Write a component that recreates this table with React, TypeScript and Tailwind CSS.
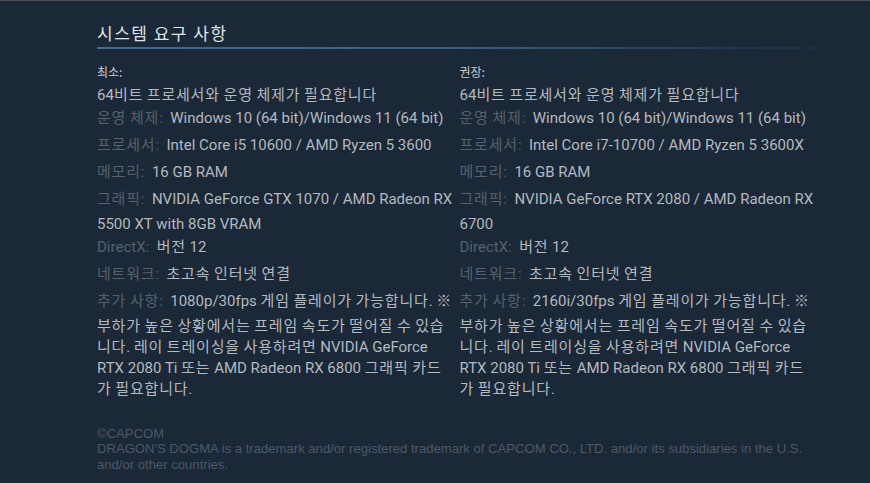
import React from "react";

const KR = "font-['Noto_Sans_CJK_KR','Noto_Sans',sans-serif]";
const LAT = "font-['Roboto','Noto_Sans_CJK_KR',sans-serif]";

type Row = { label: string; value: string };

const minRows: Row[] = [
  { label: "운영 체제:", value: "Windows 10 (64 bit)/Windows 11 (64 bit)" },
  { label: "프로세서:", value: "Intel Core i5 10600 / AMD Ryzen 5 3600" },
  { label: "메모리:", value: "16 GB RAM" },
  { label: "그래픽:", value: "NVIDIA GeForce GTX 1070 / AMD Radeon RX 5500 XT with 8GB VRAM" },
  { label: "DirectX:", value: "버전 12" },
  { label: "네트워크:", value: "초고속 인터넷 연결" },
  {
    label: "추가 사항:",
    value:
      "1080p/30fps 게임 플레이가 가능합니다. ※ 부하가 높은 상황에서는 프레임 속도가 떨어질 수 있습니다. 레이 트레이싱을 사용하려면 NVIDIA GeForce RTX 2080 Ti 또는 AMD Radeon RX 6800 그래픽 카드가 필요합니다.",
  },
];

const recRows: Row[] = [
  { label: "운영 체제:", value: "Windows 10 (64 bit)/Windows 11 (64 bit)" },
  { label: "프로세서:", value: "Intel Core i7-10700 / AMD Ryzen 5 3600X" },
  { label: "메모리:", value: "16 GB RAM" },
  { label: "그래픽:", value: "NVIDIA GeForce RTX 2080 / AMD Radeon RX 6700" },
  { label: "DirectX:", value: "버전 12" },
  { label: "네트워크:", value: "초고속 인터넷 연결" },
  {
    label: "추가 사항:",
    value:
      "2160i/30fps 게임 플레이가 가능합니다. ※ 부하가 높은 상황에서는 프레임 속도가 떨어질 수 있습니다. 레이 트레이싱을 사용하려면 NVIDIA GeForce RTX 2080 Ti 또는 AMD Radeon RX 6800 그래픽 카드가 필요합니다.",
  },
];

function Mix({ text }: { text: string }) {
  const parts = text.split(/([\uAC00-\uD7A3\u3131-\u318E]+)/);
  return (
    <>
      {parts.map((p, i) =>
        /[\uAC00-\uD7A3\u3131-\u318E]/.test(p) ? (
          <span key={i} className="tracking-[0.8px]">
            {p}
          </span>
        ) : (
          <React.Fragment key={i}>{p}</React.Fragment>
        )
      )}
    </>
  );
}

function Col({ title, rows }: { title: string; rows: Row[] }) {
  return (
    <div className="w-[359px]">
      <div className={`${KR} text-[12px] leading-[18px] text-[#c6cdd3] mb-[3.5px]`}>{title}</div>
      <div className={`${LAT} text-[15px] leading-[21px] text-[#b3b9bf] mb-[2px]`}>
        <Mix text="64비트 프로세서와 운영 체제가 필요합니다" />
      </div>
      <ul>
        {rows.map((r) => (
          <li key={r.label} className={`${LAT} text-[15px] leading-[21px] text-[#b3b9bf] mb-[2px]`}>
            <span className="inline-block pb-[4px] text-[#56616c]">
              <Mix text={r.label} />
            </span>
            &nbsp; <Mix text={r.value} />
          </li>
        ))}
      </ul>
    </div>
  );
}

export default function App() {
  return (
    <div className="w-[870px] h-[483px] bg-[#1b2838] border-t border-[#4a5059] overflow-hidden">
      <div className="ml-[97px] w-[718px] pt-[20px]">
        <h2 className={`${KR} text-[17px] leading-[24px] tracking-[1.5px] text-[#dfe3e6]`}>시스템 요구 사항</h2>
        <div className="mt-[2px] h-[2px] w-[745px] bg-gradient-to-r from-[#3d6c8d] via-[#35607f] to-transparent" />
        <div className="mt-[14px] flex gap-[7px]">
          <Col title="최소:" rows={minRows} />
          <Col title="권장:" rows={recRows} />
        </div>
        <div className="mt-[24px] w-[715px] font-['Liberation_Sans',Arial,sans-serif] text-[13.1px] leading-[15.5px] text-[#4c5966]">
          <div>©CAPCOM</div>
          <div>
            DRAGON'S DOGMA is a trademark and/or registered trademark of CAPCOM CO., LTD. and/or its subsidiaries in the U.S. and/or other countries.
          </div>
        </div>
      </div>
    </div>
  );
}
